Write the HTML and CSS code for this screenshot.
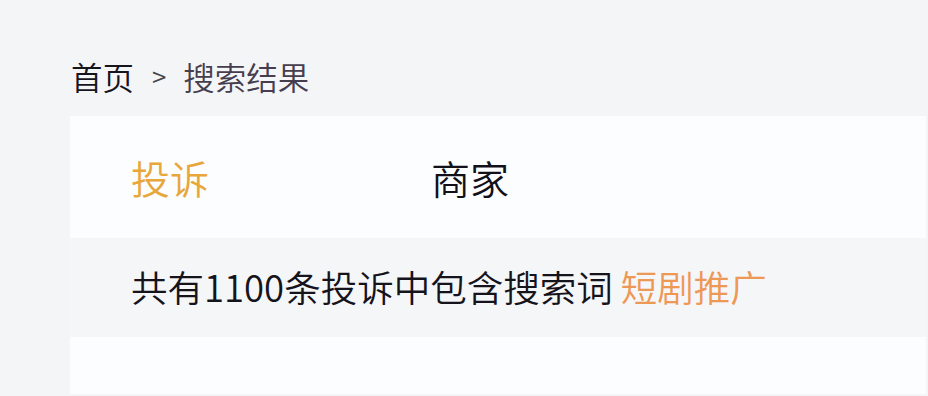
FILE: index.html
```html
<!DOCTYPE html>
<html lang="zh-CN">
<head>
<meta charset="utf-8">
<title>搜索结果</title>
<link rel="stylesheet" href="styles.css">
</head>
<body>
<div class="page">
  <nav class="crumbs">
    <span class="crumb-home">首页</span>
    <span class="crumb-sep">&gt;</span>
    <span class="crumb-current">搜索结果</span>
  </nav>
  <section class="card">
    <div class="tabs">
      <div class="tab tab-active">投诉</div>
      <div class="tab">商家</div>
    </div>
    <div class="summary">共有1100条投诉中包含搜索词 <span class="keyword">短剧推广</span></div>
    <div class="results"></div>
  </section>
</div>
</body>
</html>
```
FILE: styles.css
```css
html, body {
  margin: 0;
  padding: 0;
}
body {
  background: #f4f5f7;
  font-family: "Noto Sans CJK SC", "Noto Sans", sans-serif;
  font-weight: 350;
  width: 928px;
  height: 396px;
  overflow: hidden;
}
.page {
  display: flex;
  flex-direction: column;
  height: 396px;
  box-sizing: border-box;
  padding: 56px 2px 2px 70px;
}
.crumbs {
  display: flex;
  align-items: center;
  height: 40px;
  padding-left: 1px;
  font-size: 31.5px;
  line-height: 40px;
  margin-bottom: 20px;
}
.crumb-home {
  color: #16141c;
}
.crumb-sep {
  color: #45454c;
  font-size: 26px;
  margin: 0 17px 0 18px;
}
.crumb-current {
  color: #463e4e;
}
.card {
  flex: 1;
  display: flex;
  flex-direction: column;
  background: #fcfdfe;
}
.tabs {
  display: flex;
  align-items: center;
  height: 122px;
  padding-left: 61px;
}
.tab {
  width: 300px;
  font-size: 39px;
  line-height: 50px;
  color: #121018;
}
.tab-active {
  color: #e8a73a;
}
.summary {
  height: 99px;
  display: flex;
  align-items: center;
  padding-left: 61px;
  padding-bottom: 3px;
  box-sizing: border-box;
  background: #f5f6f8;
  font-size: 36.5px;
  color: #15131b;
  white-space: pre;
}
.keyword {
  color: #ee9856;
}
.results {
  flex: 1;
}
```
